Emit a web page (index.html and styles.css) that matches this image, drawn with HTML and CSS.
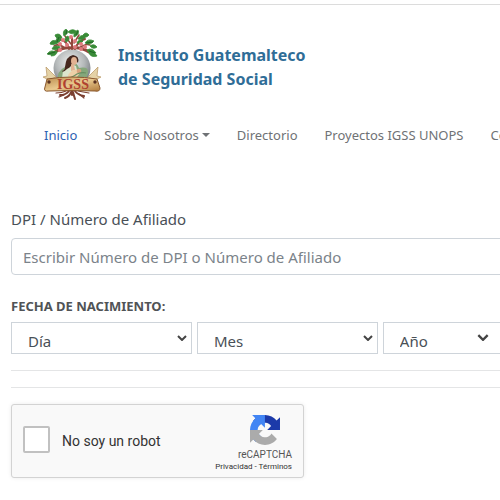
FILE: index.html
```html
<!DOCTYPE html>
<html lang="es">
<head>
  <meta charset="UTF-8">
  <meta name="viewport" content="width=device-width, initial-scale=1">
  <title>IGSS - Consulta de Afiliado</title>
  <link rel="stylesheet" href="styles.css">
</head>
<body>

  <header class="header">
    <a class="brand" href="#">
      <svg class="brand-logo" viewBox="0 0 60 72" aria-hidden="true">
        <defs>
          <radialGradient id="globe" cx="45%" cy="35%" r="65%">
            <stop offset="0" stop-color="#eef0ef"/>
            <stop offset=".6" stop-color="#b3b7b8"/>
            <stop offset="1" stop-color="#75797f"/>
          </radialGradient>
          <linearGradient id="ribbon" x1="0" x2="1" y1="0" y2="1">
            <stop offset="0" stop-color="#b98b4c"/>
            <stop offset=".5" stop-color="#e9c98f"/>
            <stop offset="1" stop-color="#b07a3c"/>
          </linearGradient>
        </defs>
        <!-- roots -->
        <g fill="none" stroke="#7b3f30" stroke-linecap="round">
          <path stroke-width="2" d="M30 61v5M27 62q-3 4-9 4M33 62q3 4 9 5M29 63q-1 4-6 6M31 63q1 4 2 7"/>
          <path stroke-width="1.2" d="M24 62q-4 2-10 2M36 62q5 1 11 2M22 66l-5 2M37 65l5 4"/>
        </g>
        <!-- globe and mother with child -->
        <circle cx="30" cy="39" r="18.5" fill="url(#globe)"/>
        <path d="M16 53q-2-11 7-15l6-4q6-1 8 5 10-2 9 5-1 7-8 9z" fill="#85a77b"/>
        <path d="M21 42q5-6 8-7l5 2 2 8-7 7-9-3z" fill="#dce5cd"/>
        <path d="M23 38q1-11 8-12 7 1 5 8-2-4-5-2-1 6-6 8-4 4-5 2 3-1 3-4z" fill="#45281f"/>
        <ellipse cx="32" cy="32" rx="3" ry="4" fill="#e3b292"/>
        <path d="M29 35l3 1 1 5-4 1z" fill="#e3b292"/>
        <path d="M26 46q4-6 10-5l3 2-5 6-7 2z" fill="#edcfa7"/>
        <circle cx="37" cy="42" r="2.3" fill="#d8a27d"/>
        <path d="M22 50q8-1 13-5 5-2 9-1" fill="none" stroke="#688f62" stroke-width="1.2"/>
        <!-- crown of the tree -->
        <g fill="none" stroke="#92473c" stroke-linecap="round">
          <path stroke-width="3" d="M13 23q8-5 17-4 9-1 17 4"/>
          <path stroke-width="2" d="M30 20V9M27 20q-2-8-8-9M33 20q3-8 10-10"/>
          <path stroke-width="1.5" d="M23 19q-7-5-11-2M37 19q7-5 11-3M29 15l-6-8M32 14l5-8"/>
        </g>
        <g fill="#398b37" stroke="#398b37" stroke-width=".8" stroke-linejoin="round">
          <path d="M5 25q4-5 8-2-2 4-8 2zM9 27q1-5 6-5 0 5-6 5zM8 15q1-5 7-3-1 5-7 3zM14 15q-1-6 4-8 3 5-4 8zM13 6q5-3 7 3-6 2-7-3zM22 7q-2-5 2-7 4 4-2 7zM26 3q4-4 8-1-3 5-8 1zM32 8q-1-5 4-7 2 5-4 7zM36 10q2-5 8-3-2 5-8 3zM41 6q3-4 6 0-3 4-6 0zM43 14q3-5 9-2-4 5-9 2zM48 17q4-3 7 1-4 3-7-1zM45 21q5-3 9 3-7 2-9-3zM47 24q6-1 8 3-6 2-8-3zM10 20q2-5 8-2-3 4-8 2zM24 13q-3-4 2-6 3 4-2 6zM35 14q1-4 6-2-2 4-6 2z"/>
        </g>
        <path d="M6 25l7-2M15 13l2-5M24 5l1-4M34 6l2-4M44 14l7-1M47 22l6 2" stroke="#216526" fill="none"/>
        <g fill="#e07a7e">
          <circle cx="18" cy="15" r="2"/><circle cx="21" cy="11" r="2"/>
          <circle cx="29" cy="8" r="2"/><circle cx="25" cy="16" r="2"/>
          <circle cx="33" cy="12" r="2"/><circle cx="39" cy="15" r="2"/>
          <circle cx="43" cy="18" r="2"/><circle cx="33" cy="18" r="2"/>
          <circle cx="18" cy="21" r="2"/><circle cx="39" cy="20" r="2"/>
        </g>
        <!-- ribbon -->
        <path d="M7 51L1 48l4-1-1-9 5 5 5 5zM53 51l6-3-4-1 1-9-5 5-5 5z" fill="#e5d2a6" stroke="#b69460" stroke-width=".7"/>
        <path d="M5 50q25-4 50 0l3 9q0 4-5 3-23-1-46 0-6 1-4-4z" fill="url(#ribbon)" stroke="#8a582e" stroke-width="1"/>
        <circle cx="7" cy="53" r="1.7" fill="#5c3422"/>
        <circle cx="53" cy="53" r="1.7" fill="#5c3422"/>
        <text class="brand-initials" x="31" y="60" text-anchor="middle">IGSS</text>
      </svg>
      <span class="brand-name">Instituto Guatemalteco<br>de Seguridad Social</span>
    </a>

    <nav class="nav">
      <a class="nav-link active" href="#">Inicio</a>
      <a class="nav-link dropdown" href="#">Sobre Nosotros</a>
      <a class="nav-link" href="#">Directorio</a>
      <a class="nav-link" href="#">Proyectos IGSS UNOPS</a>
      <a class="nav-link" href="#">Contacto</a>
    </nav>
  </header>

  <main>
    <form class="form">
      <label class="label" for="dpi">DPI / Número de Afiliado</label>
      <input class="text-input" type="text" id="dpi" placeholder="Escribir Número de DPI o Número de Afiliado">

      <fieldset class="birth">
        <legend class="birth-title">FECHA DE NACIMIENTO:</legend>
        <div class="birth-row">
          <select class="select" aria-label="Día"><option>Día</option></select>
          <select class="select" aria-label="Mes"><option>Mes</option></select>
          <select class="select select-year" aria-label="Año"><option>Año</option></select>
        </div>
      </fieldset>

      <hr class="line">
      <hr class="line">

      <div class="captcha">
        <input class="captcha-check" type="checkbox" id="robot">
        <label class="captcha-label" for="robot">No soy un robot</label>
        <div class="captcha-info">
          <svg class="captcha-logo" viewBox="0 0 64 64" aria-hidden="true">
            <path fill="#1c3aa9" d="M64 31.955l-.033-1.37V4.687l-7.16 7.16C50.948 4.674 42.033.093 32.05.093c-10.4 0-19.622 4.96-25.458 12.64l11.736 11.86a15.55 15.55 0 0 1 4.754-5.334c2.05-1.6 4.952-2.906 8.968-2.906.485 0 .86.057 1.135.163 4.976.393 9.288 3.14 11.828 7.124l-8.307 8.307L64 31.953"/>
            <path fill="#4285f4" d="M31.862.094l-1.37.033H4.594l7.16 7.16C4.58 13.147 0 22.06 0 32.046c0 10.4 4.96 19.622 12.64 25.458L24.5 45.768a15.55 15.55 0 0 1-5.334-4.754c-1.6-2.05-2.906-4.952-2.906-8.968 0-.485.057-.86.163-1.135.393-4.976 3.14-9.288 7.124-11.828l8.307 8.307L31.86.095"/>
            <path fill="#ababab" d="M.001 32.045l.033 1.37v25.898l7.16-7.16c5.86 7.173 14.774 11.754 24.76 11.754 10.4 0 19.622-4.96 25.458-12.64l-11.736-11.86a15.55 15.55 0 0 1-4.754 5.334c-2.05 1.6-4.952 2.906-8.968 2.906-.485 0-.86-.057-1.135-.163-4.976-.393-9.288-3.14-11.828-7.124l8.307-8.307c-10.522.04-22.4.066-27.295-.005"/>
          </svg>
          <span class="captcha-name">reCAPTCHA</span>
          <div class="captcha-links"><a href="#">Privacidad</a> - <a href="#">Términos</a></div>
        </div>
      </div>
    </form>
  </main>

</body>
</html>
```
FILE: styles.css
```css
* {
  box-sizing: border-box;
}

body {
  margin: 0;
  font-family: "Noto Sans", "Open Sans", sans-serif;
  color: #495057;
  background: white;
  overflow-x: hidden;
}

a {
  color: inherit;
  text-decoration: none;
}

/* header */
.header {
  margin-top: 4px;
  padding: 24px 0 0 42px;
  border-top: 1px solid #dcdcdc;
}

.brand {
  display: flex;
  align-items: center;
  gap: 16px;
}

.brand-logo {
  width: 60px;
  height: 72px;
}

.brand-initials {
  font-family: "Liberation Serif", serif;
  font-size: 14px;
  font-weight: bold;
  fill: #b0412f;
}

.brand-name {
  padding-top: 4px;
  font-size: 16px;
  line-height: 24px;
  font-weight: bold;
  color: #2f6d97;
}

.nav {
  display: flex;
  gap: 27px;
  margin-top: 24px;
  padding-left: 2px;
}

.nav-link {
  flex: none;
  font-size: 13px;
  line-height: 20px;
  color: #6f7275;
}

.nav-link.active {
  color: #2d62b3;
}

.dropdown::after {
  content: "";
  display: inline-block;
  margin-left: 3px;
  vertical-align: 3px;
  border-top: 4px solid #6f7275;
  border-left: 4px solid transparent;
  border-right: 4px solid transparent;
}

/* form */
.form {
  padding: 64px 0 24px 11px;
}

.label {
  display: block;
  font-size: 15px;
  line-height: 20px;
}

.text-input {
  display: block;
  width: 104%;
  height: 37px;
  margin-top: 9px;
  padding: 0 11px;
  border: 1px solid #ced4da;
  border-radius: 4px;
  font-family: inherit;
  font-size: 15px;
  color: #495057;
}

.text-input::placeholder {
  color: #7b838a;
}

.birth {
  min-width: 0;
  margin: 21px 0 0;
  padding: 0;
  border: none;
}

.birth-title {
  padding: 0;
  font-size: 13px;
  line-height: 20px;
  font-weight: bold;
  color: #505356;
}

.birth-row {
  display: flex;
  gap: 5px;
  padding-top: 6px;
}

.select {
  flex: none;
  width: 37%;
  height: 32px;
  padding: 5px 16px 0;
  border: 1px solid #ced4da;
  border-radius: 0;
  appearance: none;
  font-family: inherit;
  font-size: 15px;
  color: #495057;
  background: white url("data:image/svg+xml,%3Csvg xmlns='http://www.w3.org/2000/svg' viewBox='0 0 10 6'%3E%3Cpath d='M1 1l4 4 4-4' fill='none' stroke='%23444' stroke-width='2'/%3E%3C/svg%3E") no-repeat right 4px top 12px / 10px 6px;
}

.select-year {
  background-position: left 93px top 11px;
  background-size: 12px 7px;
}

.line {
  margin: 16px 0 0;
  border: none;
  border-top: 1px solid #e4e5e6;
}

/* captcha */
.captcha {
  display: flex;
  align-items: center;
  width: 293px;
  height: 74px;
  margin-top: 16px;
  padding: 0 11px;
  border: 1px solid #d3d3d3;
  border-radius: 3px;
  background: #f9f9f9;
  box-shadow: 0 0 4px rgba(0, 0, 0, 0.08);
  font-family: Roboto, sans-serif;
}

.captcha-check {
  width: 27px;
  height: 27px;
  margin: 0 12px 3px 0;
  border: 2px solid #c1c1c1;
  border-radius: 2px;
  appearance: none;
  background: white;
}

.captcha-label {
  font-size: 14px;
  color: #333;
}

.captcha-info {
  display: flex;
  flex-direction: column;
  align-items: flex-end;
  margin-left: auto;
  padding-top: 5px;
  color: #555;
}

.captcha-logo {
  width: 30px;
  height: 30px;
  margin-right: 12px;
}

.captcha-name {
  margin-top: 4px;
  font-size: 10px;
  line-height: 12px;
}

.captcha-links {
  font-size: 8px;
  line-height: 12px;
  color: #333;
}
```
